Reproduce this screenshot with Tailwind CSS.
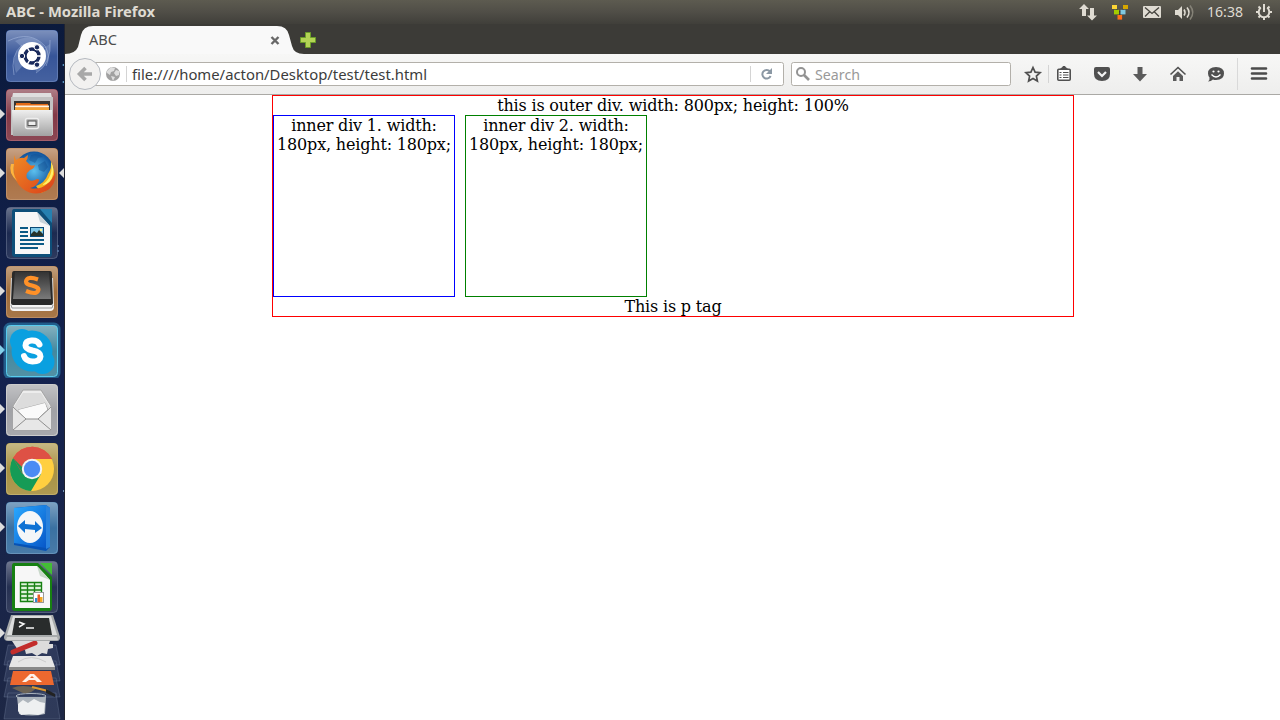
<!DOCTYPE html>
<html lang="en">
<head>
<meta charset="utf-8">
<title>ABC - Mozilla Firefox</title>
<script src="https://cdn.jsdelivr.net/npm/@tailwindcss/browser@4"></script>
</head>
<body class="w-[1280px] h-[720px] overflow-hidden flex flex-col bg-white font-['Noto_Sans',sans-serif]">
<header class="h-6 shrink-0 flex items-center justify-between bg-linear-to-b from-[#5d5b50] via-[#504e47] to-[#403f3a] text-[#dfdbd2] pl-1.5">
  <h1 class="text-sm leading-6 font-bold"><svg class="block" width="160" height="24"><text x="0" y="17" font-size="14" textLength="149" lengthAdjust="spacingAndGlyphs" fill="#dfdbd2">ABC - Mozilla Firefox</text></svg></h1>
  <svg width="210" height="24" viewBox="1070 0 210 24" fill="#dfdbd2">
    <path d="M1084 4l5 5h-3v7h-4V9h-3zM1092 20.500l-5-5h3V8h4v7.500h3z"/>
    <path d="M1114 7l6 5 6-5M1120 12v5" stroke="#333" fill="none"/>
    <path d="M1112 5h5v4h-5z" fill="#fcd535"/><path d="M1123 5h5v4h-5z" fill="#d6a700"/><path d="M1114 9.800h5v4.600h-5z" fill="#a4cc00"/><path d="M1120.500 9.800h5v4.600h-5z" fill="#80c8e0"/><path d="M1117.500 15h4.600v4.600h-4.600z" fill="#ff7119"/>
    <rect x="1143" y="6" width="18" height="12" rx="1"/><path d="M1145 7.500l7 6 7-6M1145 16.500l4.500-4.500M1159 16.500l-4.500-4.500" stroke="#44423c" stroke-width="1.300" fill="none"/>
    <path d="M1175 10h3l4-4v13l-4-4h-3z"/><g fill="none" stroke="#dfdbd2" stroke-width="1.600"><path d="M1184 9.500q2 3 0 6"/><path d="M1187 7.500q4 5 0 10"/><path d="M1190 5.500q5.500 7 0 14" stroke="#858277"/></g>
    <text x="1207" y="17" font-size="14" textLength="36" lengthAdjust="spacingAndGlyphs">16:38</text>
    <g fill="none" stroke="#dfdbd2"><path d="M1260.800 7.800a5.300 5.300 0 1 0 6.400 0" stroke-width="2"/><path d="M1264 4v8" stroke-width="2"/><path d="M1256 12h2.500M1269.500 12h2.500M1264 17v3M1258.500 17.500l2-2M1269.500 17.500l-2-2M1258.500 6.500l2 2M1269.500 6.500l-2 2" stroke-width="2"/></g>
  </svg>
</header>
<div class="flex flex-1 min-h-0">
<nav class="w-[65px] shrink-0 flex flex-col bg-linear-to-b from-[#0b1a3c] via-[#14224f] to-[#1d2745] border-r border-[#20232f]">
  <svg class="h-[59px] w-16" viewBox="0 0 64 59">
    <defs>
      <linearGradient id="gloss" x2="0" y2="1"><stop stop-color="#fff" stop-opacity=".38"/><stop offset=".5" stop-color="#fff" stop-opacity=".05"/><stop offset="1" stop-color="#fff" stop-opacity=".12"/></linearGradient>
      <linearGradient id="metal" x2="0" y2="1"><stop stop-color="#efefef"/><stop offset="1" stop-color="#a2a2a2"/></linearGradient>
      <linearGradient id="fox" x2="1" y2="1"><stop stop-color="#f08a24"/><stop offset="1" stop-color="#d9401b"/></linearGradient>
      <radialGradient id="globe"><stop stop-color="#5cc0ee"/><stop offset="1" stop-color="#10529c"/></radialGradient>
      <linearGradient id="key" x2="0" y2="1"><stop stop-color="#333"/><stop offset="1" stop-color="#7a7a7a"/></linearGradient>
      <linearGradient id="tv" x2="1" y2="1"><stop stop-color="#2aa9ff"/><stop offset="1" stop-color="#0757c8"/></linearGradient>
    </defs>
    <rect x="6" y="6" width="52" height="52" rx="4" fill="#2c4c93"/><rect x="6.500" y="6.500" width="51" height="51" rx="4" fill="url(#gloss)" stroke="#8aa0cc" stroke-opacity=".5"/>
    <g fill="none" stroke="#aebfe3" stroke-opacity=".5"><path d="M8 17Q30 6 45 22q6 10 1 20M14 51q-4-20 8-30M50 16q2 24-14 33"/></g>
    <path d="M15 17q20-10 31 8L32 32zM16 49q-5-16 3-24l13 7zM36 48q14-6 14-28L34 30z" fill="#b8c8e8" opacity=".28"/>
    <circle cx="32" cy="32" r="14" fill="#fff"/><circle cx="32" cy="32" r="7" fill="none" stroke="#19295c" stroke-width="3.400"/>
    <path d="M32 32h9M32 32l-4.500 8M32 32l-4.500-8" stroke="#fff" stroke-width="1.500"/><circle cx="32" cy="32" r="5" fill="#fff"/>
    <g fill="#19295c" stroke="#fff"><circle cx="22" cy="32" r="2.700"/><circle cx="37" cy="23.300" r="2.700"/><circle cx="37" cy="40.700" r="2.700"/></g>
    <circle cx="63.500" cy="41" r="1" fill="#5b9bc8"/><circle cx="63.500" cy="58" r="1" fill="#5b9bc8"/>
  </svg>
  <svg class="h-[59px] w-16" viewBox="0 0 64 59">
    <path d="M0 26l5 5-5 5z" fill="#ddd"/><rect x="6" y="6" width="52" height="52" rx="4" fill="#7c2f3d"/><rect x="6.500" y="6.500" width="51" height="51" rx="4" fill="url(#gloss)" stroke="#b97682" stroke-opacity=".6"/>
    <path d="M13 10h38l2 10H11z" fill="#dedede"/><path d="M11 14h42v38H11z" fill="#c2c2c2"/><path d="M14 18h36v12H14z" fill="#383330"/><path d="M16 20h14l1 1h17v9H16z" fill="#e56b16"/><path d="M15 22.500h34v2H15z" fill="#fff4e0"/><path d="M15 24.500h34v3H15z" fill="#f4a437"/>
    <path d="M12 27h40v26H13z" fill="url(#metal)"/><path d="M12 27.500h40" stroke="#eee"/><rect x="25.500" y="35.500" width="13" height="10" rx="2" fill="#aaa" stroke="#eee" stroke-width="1.500"/><rect x="28" y="38" width="8" height="4.500" fill="#eee" stroke="#555"/>
  </svg>
  <svg class="h-[59px] w-16" viewBox="0 0 64 59">
    <path d="M0 26l5 5-5 5zM64 26l-5 5 5 5z" fill="#ddd"/><rect x="6" y="6" width="52" height="52" rx="4" fill="#a5693a"/><rect x="6.500" y="6.500" width="51" height="51" rx="4" fill="url(#gloss)" stroke="#cda37e" stroke-opacity=".6"/>
    <circle cx="34" cy="29" r="19.500" fill="url(#globe)"/>
    <path d="M31 13q7-3 12 2l-5 1-3 5-6-3zM38 23l7-4 3 6-4 5-5-2z" fill="#0d4789" opacity=".4"/>
    <path d="M51 19q1 7-3 13-3 9-12 12l5 7q11-4 13-15 1-8-3-17z" fill="#f7b51f"/><path d="M51 20q3 15-9 23 9 0 11-11 1-7-2-12z" fill="#fff16b"/>
    <path d="M14 13l2 5q4-3 8-2l4-3q0 4-2 6l4 4q2 1 5 0-1 4-5 5l-3 3q-2 5 2 7 3 2 8-1 3 0 2 2-3 6-9 7 10 2 17-4 6-4 8-13 2 14-9 20-12 6-23-2-10-8-9-20 0-7 0-14z" fill="url(#fox)"/><path d="M14 22q-2 9 3 17-9-8-6-17z" fill="#ffb43d"/>
  </svg>
  <svg class="h-[59px] w-16" viewBox="0 0 64 59">
    <rect x="6.500" y="6.500" width="51" height="51" rx="4" fill="url(#gloss)" stroke="#6c7895" stroke-opacity=".6"/>
    <path d="M14 8h38v45q0 3-3 3H15q-3 0-3-3V11q0-3 2-3z" fill="#0e4f79"/><path d="M15 11h22l13 14v28H15z" fill="#f7f7f7"/><path d="M40 8h12v14z" fill="#2680b0"/><path d="M37 11l13 14-10-4z" fill="#c9d4da"/>
    <g stroke="#0b5a86" stroke-width="2"><path d="M20 27h8M20 31h8M20 35h8M20 39h24M20 43h24M20 47h18"/></g><rect x="30.500" y="26.500" width="13" height="9" fill="#80c8e8" stroke="#0b4a76"/><path d="M31 35v-2l3-3 3 2 2-3 4 4v2z" fill="#26332b"/><circle cx="41" cy="29" r="1.200" fill="#fff28a"/>
    <circle cx="58" cy="50" r="1" fill="#5b7ba8"/><circle cx="58" cy="45" r="1" fill="#5b7ba8"/>
  </svg>
  <svg class="h-[59px] w-16" viewBox="0 0 64 59">
    <path d="M0 26l5 5-5 5z" fill="#ddd"/><rect x="6" y="6" width="52" height="52" rx="4" fill="#9a642f"/><rect x="6.500" y="6.500" width="51" height="51" rx="4" fill="url(#gloss)" stroke="#cda37e" stroke-opacity=".6"/>
    <path d="M11 18h42l1 29q0 4-4 4H14q-4 0-4-4z" fill="#f4f4f4"/><path d="M11 45l1 3h40l1-3" fill="none" stroke="#999"/><path d="M14 11h36q2 0 2 3l1 29q0 2-2 2H13q-2 0-2-2l1-29q0-3 2-3z" fill="#292929"/><path d="M15 12h34l2 27H13z" fill="url(#key)"/>
    <path d="M38 19.500q-11-4-12 2 0 3 6 4 8 2 6 5.500-2 4-12 0" stroke="#ff9128" fill="none" stroke-width="4.200"/>
  </svg>
  <svg class="h-[59px] w-16" viewBox="0 0 64 59">
    <path d="M0 26l5 5-5 5z" fill="#84cfe9"/><rect x="5" y="5" width="54" height="54" rx="5" fill="none" stroke="#38b7e9" stroke-opacity=".4" stroke-width="3"/><rect x="6" y="6" width="52" height="52" rx="4" fill="#3b8299"/><rect x="6.500" y="6.500" width="51" height="51" rx="4" fill="url(#gloss)" stroke="#58cbee"/>
    <circle cx="22" cy="22" r="12" fill="#0aa0e0"/><circle cx="42.500" cy="43" r="12" fill="#0aa0e0"/><circle cx="32" cy="32" r="20.500" fill="#0aa0e0"/>
    <path d="M39.500 25.500q-2-4.500-8-4-6 .5-6 5 0 3.500 7 5 8 1.500 8 6-.5 5-8 5-7-.5-8.500-5.500" fill="none" stroke="#fff" stroke-width="6" stroke-linecap="round"/>
  </svg>
  <svg class="h-[59px] w-16" viewBox="0 0 64 59">
    <path d="M0 26l5 5-5 5z" fill="#ddd"/><rect x="6" y="6" width="52" height="52" rx="4" fill="#9c9da1"/><rect x="6.500" y="6.500" width="51" height="51" rx="4" fill="url(#gloss)" stroke="#ccc"/>
    <path d="M13 28l10-16h18l10 16v24H13z" fill="#ededed" stroke="#a4a4a4"/><path d="M14 29l9-14h18l9 14-14 13H27z" fill="#dcdcdc"/><path d="M18 32l27-7 3 7-11 9H25z" fill="#fafafa" stroke="#999" stroke-width=".8"/><path d="M13 29l13 12h12l13-12v23H13z" fill="#e7e7e7"/><path d="M18 32l27-7 2 6-9 10H25z" fill="#fafafa"/><path d="M13 29l13 12h12l13-12M13 52l13-11M51 52l-13-11" fill="none" stroke="#8e8e8e"/>
  </svg>
  <svg class="h-[59px] w-16" viewBox="0 0 64 59">
    <path d="M0 26l5 5-5 5z" fill="#ddd"/><rect x="6" y="6" width="52" height="52" rx="4" fill="#a48c3a"/><rect x="6.500" y="6.500" width="51" height="51" rx="4" fill="url(#gloss)" stroke="#cfc084" stroke-opacity=".6"/>
    <circle cx="32" cy="32" r="22" fill="#ffcf40"/><path d="M32 32L13 21a22 22 0 0 0 18 33l10-17z" fill="#159b56"/><path d="M13 21a22 22 0 0 1 39 1H32L22.500 37z" fill="#de5145"/><path d="M13 21l10 16 9-10z" fill="#159b56"/><path d="M13 21a22 22 0 0 1 39 1H32a10 10 0 0 0-10 8z" fill="#de5145"/>
    <circle cx="32" cy="32" r="10.200" fill="#f4f4f4"/><circle cx="32" cy="32" r="8.200" fill="#4b8bf4"/>
    <circle cx="64" cy="54" r="1" fill="#8ebadb"/>
  </svg>
  <svg class="h-[59px] w-16" viewBox="0 0 64 59">
    <path d="M0 26l5 5-5 5z" fill="#ddd"/><rect x="6" y="6" width="52" height="52" rx="4" fill="#30699c"/><rect x="6.500" y="6.500" width="51" height="51" rx="4" fill="url(#gloss)" stroke="#83a8c8" stroke-opacity=".6"/>
    <path d="M14 12l32-3 4 3v39l-4 4-32-6z" fill="#0752b5"/><path d="M14 12l32-3v43l-32-5z" fill="url(#tv)"/><path d="M46 9l4 3v39l-4 2z" fill="#2a82dd"/>
    <ellipse cx="30" cy="31" rx="13" ry="16" fill="#f4f6f8"/><path d="M18 30l7-6v4l10 1v-4l7 7-7 5v-3l-10-1v4z" fill="#0e72d4"/>
  </svg>
  <svg class="h-[59px] w-16" viewBox="0 0 64 59">
    <rect x="6.500" y="6.500" width="51" height="51" rx="4" fill="url(#gloss)" stroke="#6c7895" stroke-opacity=".6"/>
    <path d="M14 8h24l14 14v31q0 3-3 3H15q-3 0-3-3V11q0-3 2-3z" fill="#178012"/><path d="M15 11h22l13 14v28H15z" fill="#f7f7f7"/><path d="M40 8h12v12z" fill="#43bd35"/><path d="M37 11l13 14-10-4z" fill="#c9d8ca"/>
    <path d="M20 27h22v20H20z" fill="#dff3db"/><path d="M20.500 27.500h21v19h-21zM20 31h22M20 35h22M20 39h22M20 43h22M27.500 27v20M34.500 27v20" fill="none" stroke="#178012" stroke-width="1.400"/>
    <rect x="33.500" y="37.500" width="10" height="10" fill="#fff" stroke="#999"/><path d="M35 43h2.500v4H35z" fill="#318ad0"/><path d="M37.500 39.500h2.500v7.500h-2.500z" fill="#e95b25"/><path d="M40 42h2.500v5H40z" fill="#f2a722"/>
  </svg>
  <svg class="h-[106px] w-16" viewBox="0 614 64 106">
    <g fill="#7480a2" fill-opacity=".22" stroke="#8a96b4" stroke-opacity=".4" stroke-width=".7"><path d="M8 693h48l4 26H4zM8 678h48l4 19H4zM8 661h48l4 20H4zM8 645h48l4 20H4z"/></g>
    <path d="M17 697h29l-1 17q-13 3-26 0z" fill="#aeb5bc"/><path d="M18 704l5-4 5 3 6-4 6 3 5 1-1 10-6 2-9-1-8 1-3-4z" fill="#eef0f1"/><ellipse cx="31" cy="696" rx="15" ry="2.500" fill="none" stroke="#a9b3be"/>
    <path d="M12 688q10-4 24 0-4 6-13 5z" fill="#6c6355"/><path d="M32 687l16 4" stroke="#dc962d" stroke-width="2"/><path d="M46 689l9 5v3l-9-4z" fill="#222"/>
    <path d="M13 671h38l3 14H10z" fill="#ed682f"/><path d="M22 682l8-8h4l8 8h-5l-2-2h-6l-3 2zM30 678h4l-2-2z" fill="#fff1e9"/>
    <path d="M13 656h38l4 11H9z" fill="#e6e6e6"/><path d="M9 667h46v3H9z" fill="#888"/><path d="M18 662q13-9 28 0" fill="none" stroke="#ccc"/>
    <path d="M12 641h38l-1 3h4v4l-5 1-1 5-5-1-5 3-5-3-6 1-1-4h-7z" fill="#dcdcdc"/><path d="M13 652l22-9" stroke="#c22d2b" stroke-width="5" stroke-linecap="round"/>
    <path d="M0 628l5 5-5 5z" fill="#ddd"/><path d="M11 615h42l7 22q0 4-3 4H8q-4 0-4-4z" fill="#a7aaab"/><path d="M13 616h38l6 19H7z" fill="#dcdddd"/><path d="M15 618h34l3 17H12z" fill="#292c2c"/><path d="M7 637h50l1 3H6z" fill="#d0d0d0"/><path d="M19 622l5 2-5 3M26 628h8" fill="none" stroke="#f5f5f5" stroke-width="1.500"/>
  </svg>
</nav>
<section class="flex-1 min-w-0 flex flex-col">
  <div class="h-[30px] shrink-0 bg-[#3c3b37]">
    <svg class="block" width="270" height="30" viewBox="65 24 270 30"><path d="M65 54q10 0 13-7l3-12q2-9 12-9h184q10 0 12 9l3 11q2 8 12 8z" fill="#f9f9f9"/>
      <text x="89" y="45" font-size="14" textLength="28" lengthAdjust="spacingAndGlyphs" fill="#4c4c4c">ABC</text><path d="M271.500 37l7 7M278.500 37l-7 7" stroke="#686868" stroke-width="2.400"/>
      <path d="M305.500 32.500h5v5h5v5h-5v5h-5v-5h-5v-5h5z" fill="#b4d455" stroke="#6b9d28"/></svg>
  </div>
  <div class="h-[41px] shrink-0 border-b border-[#aaa9a5] bg-linear-to-b from-[#f7f7f6] to-[#eeeeed]">
    <svg class="block" width="1215" height="40" viewBox="65 54 1215 40">
      <rect x="85.500" y="62.500" width="698" height="23" rx="2" fill="#fff" stroke="#b3b0aa"/><rect x="791.500" y="62.500" width="219" height="23" rx="2" fill="#fff" stroke="#b3b0aa"/>
      <circle cx="85" cy="74" r="15.500" fill="#f2f1f0" stroke="#b5b9c0"/><path d="M92 74H81M85.500 68l-6 6 6 6" fill="none" stroke="#a8a8a8" stroke-width="3.600"/>
      <circle cx="113" cy="74" r="7" fill="#a1a1a1"/><path d="M107 71l4-4 4 1-1 3-3 1-1 3-3-2zM116 70l3 1v4l-3 1-2-3zM111 76l4 1-2 4z" fill="#dedede"/>
      <path d="M126.500 66v16M750.500 66v16M1048.500 65v18" stroke="#d4d4d4"/>
      <text x="132" y="80" font-size="14" textLength="295" lengthAdjust="spacingAndGlyphs" fill="#3c3c3c">file:////home/acton/Desktop/test/test.html</text>
      <path d="M770 71.500a4.300 4.300 0 1 0 .6 4.500" fill="none" stroke="#8b98a4" stroke-width="2"/><path d="M772 68v6h-6z" fill="#8b98a4"/>
      <circle cx="801" cy="72" r="4" fill="none" stroke="#939393" stroke-width="2"/><path d="M804 75l5 5" stroke="#939393" stroke-width="2.600"/>
      <text x="815" y="80" font-size="14" textLength="45" lengthAdjust="spacingAndGlyphs" fill="#999">Search</text>
      <path d="M1033 67.500l2.100 4.600 5 .6-3.700 3.400 1 5-4.400-2.500-4.400 2.500 1-5-3.700-3.400 5-.6z" fill="none" stroke="#505050" stroke-width="1.700"/>
      <rect x="1057.800" y="69.300" width="12.400" height="11" rx="1" fill="#fff" stroke="#505050" stroke-width="1.600"/><path d="M1060.500 69l1.500-1 1-1.500h2l1 1.500 1.500 1z" fill="#505050" stroke="#505050"/><path d="M1059.500 72.500h2M1063 72.500h5.500M1059.500 75h2M1063 75h5.500M1059.500 77.500h2M1063 77.500h5.500" stroke="#505050" stroke-width="1.200"/>
      <path d="M1096 67h12q2 0 2 2v5q0 7-8 7t-8-7v-5q0-2 2-2z" fill="#505050"/><path d="M1098 72l4 4 4-4" fill="none" stroke="#f4f4f4" stroke-width="2.200"/>
      <path d="M1137.500 67h5v7h4.500l-7 7.500-7-7.500h4.500z" fill="#5b5b5b"/>
      <path d="M1170.500 74.500l7.500-7 7.500 7" fill="none" stroke="#505050" stroke-width="1.600"/><path d="M1173 76l5-4.800 5 4.800v5h-3.500v-4h-3v4h-3.500z" fill="#5b5b5b"/>
      <path d="M1216 67q8 0 8 6.500t-8 6.500q-2 0-3-.5-2 2-5 2 2-2 1.500-4-1.500-2-1.500-4 0-6.500 8-6.500z" fill="#505050"/><circle cx="1213.500" cy="71.500" r="1.100" fill="#fff"/><circle cx="1218.500" cy="71.500" r="1.100" fill="#fff"/><path d="M1211.500 74.500q4.500 5 9 0" fill="none" stroke="#fff" stroke-width="1.300"/>
      <path d="M1237.500 58v32" stroke="#d9d9d9"/><path d="M1252 68.500h14M1252 73.500h14M1252 78.500h14" stroke="#4b4b4b" stroke-width="2.600" stroke-linecap="round"/>
    </svg>
  </div>
  <main class="flex-1 bg-white text-black text-base leading-[19px] tracking-[-0.175px] text-center font-['DejaVu_Serif',serif]">
    <div class="ml-[207px] w-[802px] border border-[#ff0000]">
      <p>this is outer div. width: 800px; height: 100%</p>
      <div class="flex gap-2.5">
        <div class="size-[182px] border border-[#0000ff]">inner div 1. width: 180px, height: 180px;</div>
        <div class="size-[182px] border border-[#008000]">inner div 2. width: 180px, height: 180px;</div>
      </div>
      <p>This is p tag</p>
    </div>
  </main>
</section>
</div>
</body>
</html>
